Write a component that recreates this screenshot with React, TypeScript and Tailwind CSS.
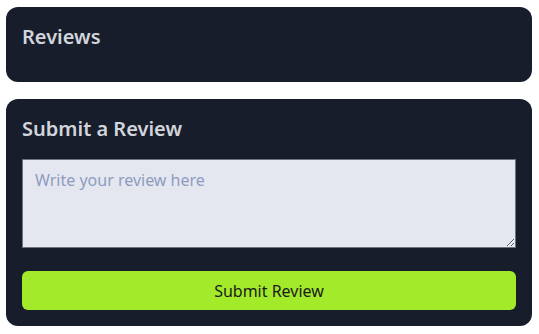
export default function App() {
  return (
    <div className="min-h-screen bg-white px-[6px] pt-[7px] pr-[7px]" style={{ fontFamily: '"Noto Sans", "Open Sans", sans-serif' }}>
      <div className="rounded-xl bg-[#181d2b] p-4 pb-[15px] mb-[17px]">
        <h2 className="text-xl font-semibold text-[#d1d5db] leading-7 mb-4">Reviews</h2>
      </div>
      <div className="rounded-xl bg-[#181d2b] p-4">
        <h2 className="text-xl font-semibold text-[#d1d5db] leading-7 mb-4">Submit a Review</h2>
        <textarea
          rows={3}
          placeholder="Write your review here"
          className="block w-full h-[89px] bg-[#e4e7f0] border border-[#6b7280] px-3 py-2 text-base leading-6 text-black placeholder:text-[#8e9cc0] outline-none"
        />
        <button className="mt-[23px] block w-full h-[39px] rounded-md bg-[#a3ea2a] text-base text-[#1a1a1a]">
          Submit Review
        </button>
      </div>
    </div>
  );
}
